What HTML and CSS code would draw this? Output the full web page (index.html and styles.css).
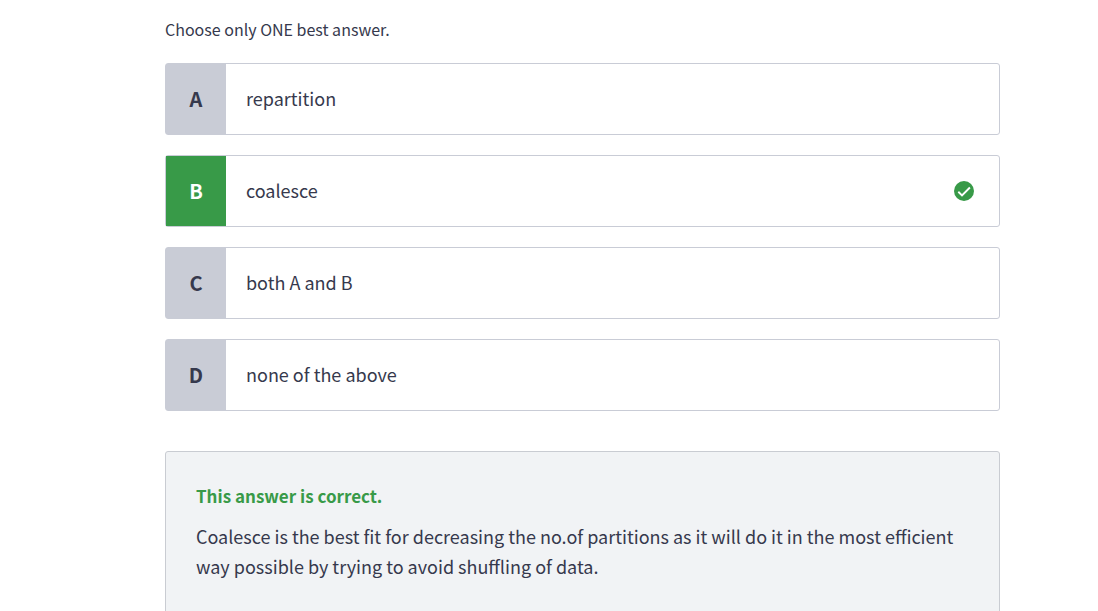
FILE: index.html
```html
<!DOCTYPE html>
<html lang="en">
<head>
<meta charset="utf-8">
<meta name="viewport" content="width=device-width, initial-scale=1">
<title>Quiz question</title>
<link rel="stylesheet" href="styles.css">
</head>
<body>
<main class="quiz">
  <form>
    <fieldset class="options">
      <legend class="hint">Choose only ONE best answer.</legend>
      <label class="option">
        <input class="radio" type="radio" name="answer" value="A">
        <span class="letter">A</span>
        <span class="text">repartition</span>
      </label>
      <label class="option">
        <input class="radio" type="radio" name="answer" value="B" checked>
        <span class="letter">B</span>
        <span class="text">coalesce</span>
        <svg class="tick" viewBox="0 0 20 20" aria-hidden="true">
          <circle cx="10" cy="10" r="10" fill="#389a48"/>
          <path d="M4.3 10.8 8 14.4 15.9 6.5" fill="none" stroke="#fff" stroke-width="1.9"/>
        </svg>
      </label>
      <label class="option">
        <input class="radio" type="radio" name="answer" value="C">
        <span class="letter">C</span>
        <span class="text">both A and B</span>
      </label>
      <label class="option">
        <input class="radio" type="radio" name="answer" value="D">
        <span class="letter">D</span>
        <span class="text">none of the above</span>
      </label>
    </fieldset>
  </form>
  <section class="feedback">
    <h2 class="verdict">This answer is correct.</h2>
    <p class="explanation">Coalesce is the best fit for decreasing the no.of partitions as it will do it in the most efficient way possible by trying to avoid shuffling of data.</p>
  </section>
</main>
</body>
</html>
```
FILE: styles.css
```css
* {
  box-sizing: border-box;
}

body {
  margin: 0;
  background: #fff;
  color: #36394d;
  font-family: "Source Sans Pro", "Noto Sans CJK SC", "Noto Sans", sans-serif;
  font-size: 18px;
  line-height: 30px;
}

.quiz {
  padding: 14px 98px 0 165px;
}

.options {
  display: flex;
  flex-direction: column;
  gap: 20px;
  min-width: 0;
  margin: 0;
  padding: 0;
  border: 0;
}

.hint {
  margin-bottom: 19px;
  padding: 0;
  font-size: 16px;
}

.option {
  position: relative;
  display: flex;
  align-items: stretch;
  min-height: 72px;
  border: 1px solid #c9ccd6;
  border-radius: 3px;
  cursor: pointer;
}

.radio {
  position: absolute;
  opacity: 0;
}

.letter {
  display: flex;
  flex: none;
  align-items: center;
  justify-content: center;
  width: 60px;
  background: #c9ccd6;
  font-size: 20px;
  font-weight: 700;
}

.radio:checked + .letter {
  background: #389a48;
  color: #fff;
}

.radio:focus-visible + .letter {
  outline: 2px solid #36394d;
}

.text {
  flex: 1;
  padding: 19px 20px 21px;
}

.tick {
  flex: none;
  align-self: center;
  width: 20px;
  height: 20px;
  margin-right: 25px;
}

.feedback {
  margin-top: 40px;
  padding: 29px 30px 40px;
  border: 1px solid #c9ccd2;
  border-radius: 3px;
  background: #f1f3f5;
}

.verdict {
  margin: 0 0 10px;
  color: #389a48;
  font-size: 17px;
  font-weight: 600;
}

.explanation {
  margin: 0;
}
```
